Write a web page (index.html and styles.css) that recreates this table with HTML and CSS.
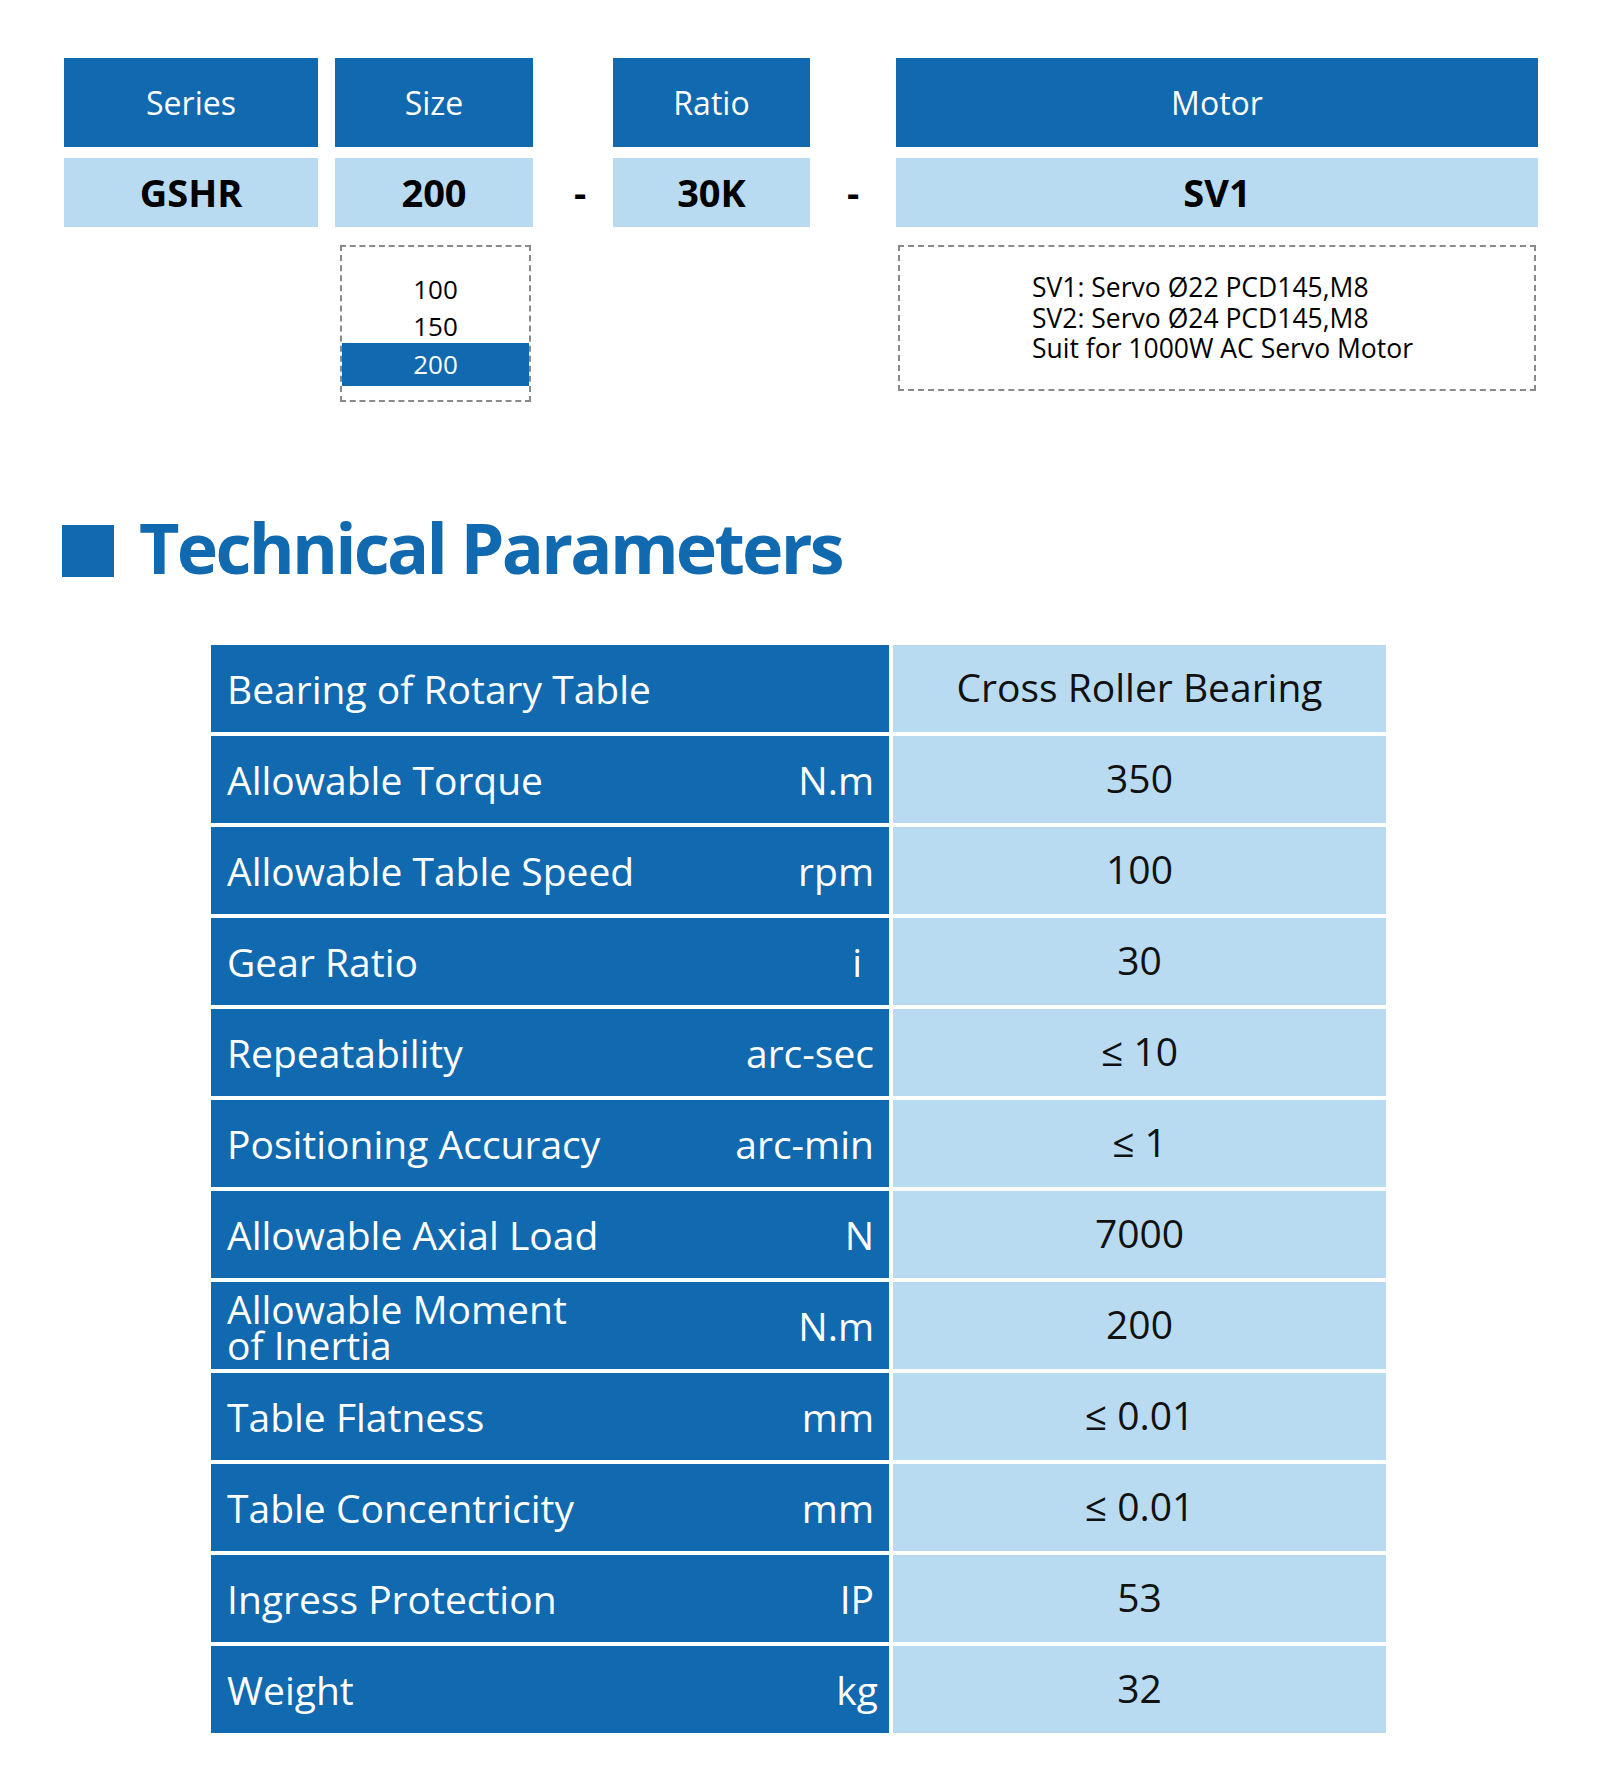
FILE: index.html
```html
<!DOCTYPE html>
<html lang="en">
<head>
<meta charset="utf-8">
<title>GSHR Technical Parameters</title>
<link rel="stylesheet" href="styles.css">
</head>
<body>
<div class="page">
  <div class="code">
    <div class="col col-series">
      <div class="hd">Series</div>
      <div class="val">GSHR</div>
    </div>
    <div class="col col-size">
      <div class="hd">Size</div>
      <div class="val">200</div>
      <div class="drop">
        <div class="opt">100</div>
        <div class="opt">150</div>
        <div class="opt sel">200</div>
      </div>
    </div>
    <div class="sep sep-1"><span>-</span></div>
    <div class="col col-ratio">
      <div class="hd">Ratio</div>
      <div class="val">30K</div>
    </div>
    <div class="sep sep-2"><span>-</span></div>
    <div class="col col-motor">
      <div class="hd">Motor</div>
      <div class="val">SV1</div>
      <div class="note">
        <div class="note-text">
          <div>SV1: Servo Ø22 PCD145,M8</div>
          <div>SV2: Servo Ø24 PCD145,M8</div>
          <div>Suit for 1000W AC Servo Motor</div>
        </div>
      </div>
    </div>
  </div>

  <h2 class="title"><span class="mark"></span><span class="title-text">Technical Parameters</span></h2>

  <div class="params">
    <div class="p-name"><span>Bearing of Rotary Table</span></div>
    <div class="p-val">Cross Roller Bearing</div>

    <div class="p-name"><span>Allowable Torque</span><span>N.m</span></div>
    <div class="p-val">350</div>

    <div class="p-name"><span>Allowable Table Speed</span><span>rpm</span></div>
    <div class="p-val">100</div>

    <div class="p-name"><span>Gear Ratio</span><span class="unit-i">i</span></div>
    <div class="p-val">30</div>

    <div class="p-name"><span>Repeatability</span><span>arc-sec</span></div>
    <div class="p-val">≤ 10</div>

    <div class="p-name"><span>Positioning Accuracy</span><span>arc-min</span></div>
    <div class="p-val">≤ 1</div>

    <div class="p-name"><span>Allowable Axial Load</span><span>N</span></div>
    <div class="p-val">7000</div>

    <div class="p-name"><span class="two-line">Allowable Moment<br>of Inertia</span><span>N.m</span></div>
    <div class="p-val">200</div>

    <div class="p-name"><span>Table Flatness</span><span>mm</span></div>
    <div class="p-val">≤ 0.01</div>

    <div class="p-name"><span>Table Concentricity</span><span>mm</span></div>
    <div class="p-val">≤ 0.01</div>

    <div class="p-name"><span>Ingress Protection</span><span>IP</span></div>
    <div class="p-val">53</div>

    <div class="p-name"><span>Weight</span><span class="unit-kg">kg</span></div>
    <div class="p-val">32</div>
  </div>
</div>
</body>
</html>
```

FILE: styles.css
```css
html, body {
  margin: 0;
  padding: 0;
  background: #ffffff;
}

body {
  font-family: "Open Sans", "Noto Sans", "Liberation Sans", sans-serif;
  color: #000;
}

.page {
  width: 1600px;
  height: 1775px;
  overflow: hidden;
}

/* ---------- ordering code ---------- */
.code {
  display: flex;
  align-items: flex-start;
  padding: 58px 0 0 64px;
}

.col {
  display: flex;
  flex-direction: column;
}

.col-series { width: 254px; margin-right: 17px; }
.col-size   { width: 198px; }
.col-ratio  { width: 197px; }
.col-motor  { width: 642px; }

.hd {
  height: 89px;
  background: #1169b0;
  color: #fff;
  font-size: 32px;
  display: flex;
  align-items: center;
  justify-content: center;
  margin-bottom: 11px;
  padding-bottom: 1px;
  box-sizing: border-box;
}

.val {
  height: 69px;
  background: #b9dbf2;
  color: #000;
  font-size: 38px;
  font-weight: 700;
  display: flex;
  align-items: center;
  justify-content: center;
  padding-bottom: 2px;
  box-sizing: border-box;
}

.sep {
  height: 69px;
  margin-top: 100px;
  display: flex;
  align-items: center;
  justify-content: center;
  font-size: 38px;
  font-weight: 700;
  padding-bottom: 2px;
  box-sizing: border-box;
}

.sep-1 { width: 80px; padding-left: 14px; }
.sep-2 { width: 86px; }

.drop {
  margin: 18px 0 0 5px;
  width: 187px;
  border: 2px dashed #8a8a8a;
  padding: 24px 0 14px;
  font-size: 26px;
  text-align: center;
}

.opt {
  line-height: 37px;
  height: 37px;
}

.opt.sel {
  background: #1169b0;
  color: #fff;
  height: 43px;
  line-height: 43px;
  margin-top: -2px;
}

.note {
  margin: 18px 0 0 2px;
  width: 638px;
  height: 146px;
  border: 2px dashed #8a8a8a;
  display: flex;
  align-items: center;
  padding-left: 132px;
  box-sizing: border-box;
}

.note-text {
  font-size: 26.5px;
  line-height: 30.5px;
}

/* ---------- heading ---------- */
.title {
  display: flex;
  align-items: flex-start;
  margin: 109px 0 0 62px;
  font-weight: 700;
}

.mark {
  width: 52px;
  height: 52px;
  margin-top: 14px;
  background: #1169b0;
  flex: none;
}

.title-text {
  margin-left: 25px;
  font-size: 70px;
  line-height: 72px;
  color: #1169b0;
  letter-spacing: -2.75px;
}

/* ---------- parameter table ---------- */
.params {
  display: grid;
  grid-template-columns: 678px 493px;
  grid-auto-rows: 87px;
  gap: 4px;
  margin: 62px 0 0 211px;
  width: 1175px;
  font-size: 39px;
}

.p-name {
  background: #1169b0;
  color: #fff;
  display: flex;
  align-items: center;
  justify-content: space-between;
  padding: 0 15px 0 16px;
}

.p-val {
  background: #b9dbf2;
  color: #111;
  display: flex;
  align-items: center;
  justify-content: center;
  padding-bottom: 4px;
}

.unit-i { margin-right: 12px; }
.unit-kg { margin-right: -4px; }

.two-line {
  line-height: 36px;
  padding-top: 2px;
}
```
